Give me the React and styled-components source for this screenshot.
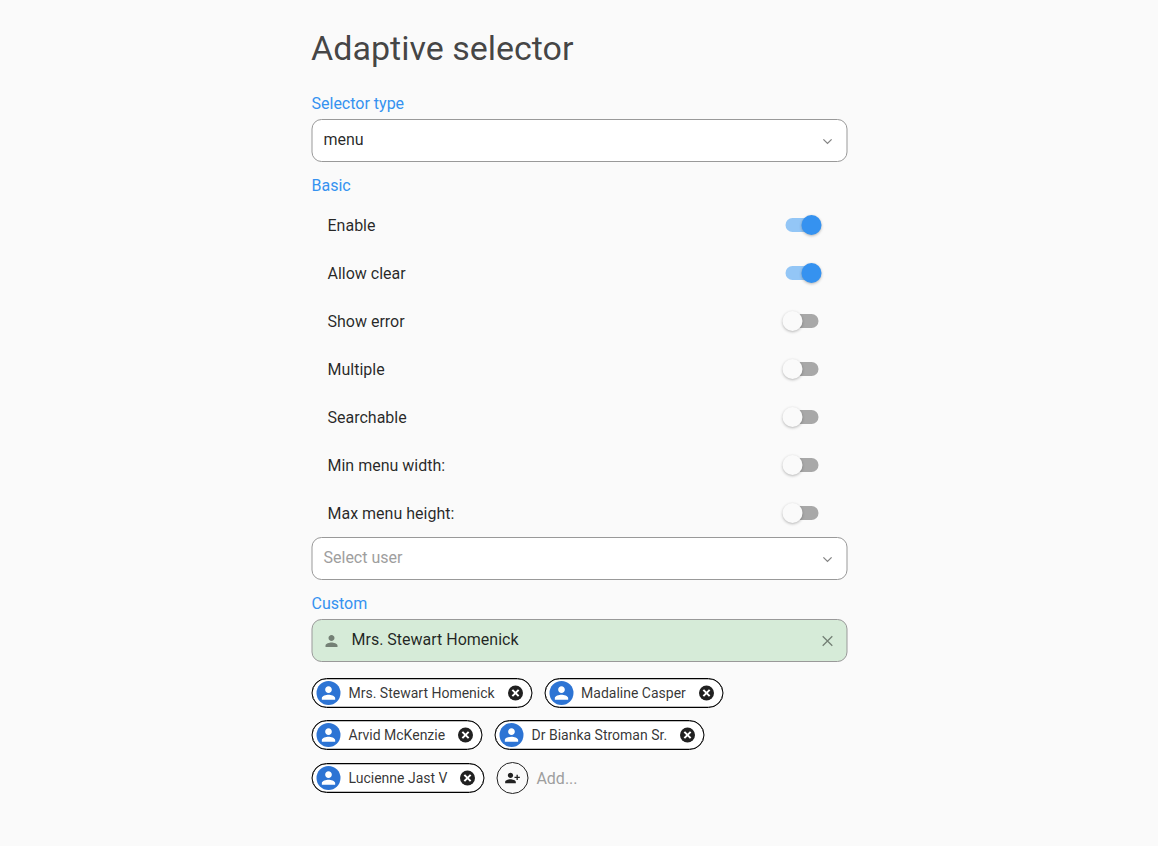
import React from "react";
import styled, { createGlobalStyle } from "styled-components";

const GlobalStyle = createGlobalStyle`
  * { box-sizing: border-box; }
  body {
    margin: 0;
    background: #fafafa;
    color: rgba(0, 0, 0, 0.85);
    font-family: Roboto, "Liberation Sans", sans-serif;
    font-size: 16px;
  }
`;

const Page = styled.main`
  width: 536px;
  margin: 0 auto;
  padding-top: 28px;
  transform: translateX(0.5px);
`;

const Title = styled.h1`
  margin: 0 0 0 -0.4px;
  font-size: 34px;
  font-weight: 400;
  line-height: 40px;
  color: rgba(0, 0, 0, 0.74);
`;

const SectionLabel = styled.h2`
  margin: ${(p) => p.$gap}px 0 6px;
  font-size: 16px;
  font-weight: 400;
  line-height: 19px;
  color: #3592f0;
`;

const Field = styled.div`
  display: flex;
  align-items: center;
  height: 43px;
  padding: 0 11px;
  border: 1px solid #999;
  border-radius: 10px;
  background: ${(p) => (p.$filled ? "#d6ebd8" : "#fff")};
`;

const FieldText = styled.span`
  flex: 1;
  line-height: 19px;
  padding-bottom: 2px;
  color: ${(p) => (p.$hint ? "#9e9e9e" : "rgba(0, 0, 0, 0.85)")};
`;

const Glyph = styled.svg`
  display: block;
  flex: none;
  width: ${(p) => p.$size}px;
  height: ${(p) => p.$size}px;
  fill: currentColor;
  color: ${(p) => p.$color || "inherit"};
  margin: ${(p) => p.$margin || 0};
`;

const SwitchList = styled.div`
  padding: 0 16px;
`;

const SwitchRow = styled.div`
  display: flex;
  align-items: center;
  justify-content: space-between;
  height: 48px;
`;

const Track = styled.button`
  display: flex;
  align-items: center;
  justify-content: ${(p) => (p.$on ? "flex-end" : "flex-start")};
  width: 33px;
  height: 14px;
  margin: 0 13px 0 0;
  padding: 0;
  border: 0;
  border-radius: 7px;
  background: ${(p) => (p.$on ? "#93c6f6" : "#a8a8a8")};
`;

const Thumb = styled.span`
  flex: none;
  width: 20px;
  height: 20px;
  margin: 0 -3px;
  border-radius: 50%;
  background: ${(p) => (p.$on ? "#3592f0" : "#fafafa")};
  box-shadow: 0 1px 3px rgba(0, 0, 0, 0.28);
`;

const ChipArea = styled.div`
  display: flex;
  flex-direction: column;
  padding-top: 16px;
`;

const ChipRow = styled.div`
  display: flex;
  align-items: center;
  gap: 12px;
  height: ${(p) => p.$height || 30}px;
  margin-bottom: ${(p) => p.$gap || 0}px;
`;

const ChipBox = styled.div`
  display: flex;
  align-items: center;
  height: 30px;
  padding: 0 7px 0 4px;
  border: 1px solid #000;
  border-radius: 15px;
  background: #fff;
  box-shadow: inset 0 0 0 0.3px #000;
`;

const Avatar = styled.span`
  display: grid;
  place-items: center;
  width: 24px;
  height: 24px;
  border-radius: 50%;
  background: #2d74d4;
  color: #fff;
`;

const ChipText = styled.span`
  margin: 0 11.4px 0 8px;
  font-size: 14px;
  line-height: 16px;
  color: rgba(0, 0, 0, 0.8);
  white-space: nowrap;
`;

const AddButton = styled.button`
  display: grid;
  place-items: center;
  width: 32px;
  height: 32px;
  margin-left: -0.5px;
  padding: 0;
  border: 1px solid #212121;
  border-radius: 50%;
  background: transparent;
  color: #212121;
`;

const AddHint = styled.span`
  margin-left: -4px;
  color: #9e9e9e;
`;

const PERSON =
  "M12 12c2.21 0 4-1.79 4-4s-1.79-4-4-4-4 1.79-4 4 1.79 4 4 4zm0 2c-2.67 0-8 1.34-8 4v2h16v-2c0-2.66-5.33-4-8-4z";
const PERSON_ADD =
  "M9 12c2.21 0 4-1.79 4-4s-1.79-4-4-4-4 1.79-4 4 1.79 4 4 4zm0 2c-2.67 0-8 1.34-8 4v2h16v-2c0-2.66-5.33-4-8-4zM20 10V7h-2v3h-3v2h3v3h2v-3h3v-2z";

const Chevron = () => (
  <Glyph $size={16} $color="#858585" viewBox="0 0 16 16">
    <path d="M3.9 6.4l4.1 4 4.1-4" fill="none" stroke="currentColor" strokeWidth="1.3" />
  </Glyph>
);

const Close = () => (
  <Glyph $size={16} $color="#748075" viewBox="0 0 16 16">
    <path d="M3.2 3.2l9.6 9.6M12.8 3.2l-9.6 9.6" fill="none" stroke="currentColor" strokeWidth="1.3" />
  </Glyph>
);

const Chip = ({ name }) => (
  <ChipBox>
    <Avatar>
      <Glyph $size={20} viewBox="0 0 24 24">
        <path d={PERSON} />
      </Glyph>
    </Avatar>
    <ChipText>{name}</ChipText>
    <Glyph $size={18} $color="#212121" viewBox="0 0 24 24">
      <circle cx="12" cy="12" r="10" />
      <path d="M7.8 7.8l8.4 8.4M16.2 7.8l-8.4 8.4" stroke="#fff" strokeWidth="2.7" />
    </Glyph>
  </ChipBox>
);

const options = [
  ["Enable", true],
  ["Allow clear", true],
  ["Show error", false],
  ["Multiple", false],
  ["Searchable", false],
  ["Min menu width:", false],
  ["Max menu height:", false],
];

export default function App() {
  return (
    <>
      <GlobalStyle />
      <Page>
        <Title>Adaptive selector</Title>
        <SectionLabel $gap={26}>Selector type</SectionLabel>
        <Field>
          <FieldText>menu</FieldText>
          <Chevron />
        </Field>
        <SectionLabel $gap={14}>Basic</SectionLabel>
        <SwitchList>
          {options.map(([label, on]) => (
            <SwitchRow key={label}>
              {label}
              <Track $on={on} role="switch" aria-checked={on} aria-label={label}>
                <Thumb $on={on} />
              </Track>
            </SwitchRow>
          ))}
        </SwitchList>
        <Field>
          <FieldText $hint>Select user</FieldText>
          <Chevron />
        </Field>
        <SectionLabel $gap={14}>Custom</SectionLabel>
        <Field $filled>
          <Glyph $size={18} $color="#748075" $margin="0 11px 0 -1px" viewBox="0 0 24 24">
            <path d={PERSON} />
          </Glyph>
          <FieldText>Mrs. Stewart Homenick</FieldText>
          <Close />
        </Field>
        <ChipArea>
          <ChipRow $gap={12}>
            <Chip name="Mrs. Stewart Homenick" />
            <Chip name="Madaline Casper" />
          </ChipRow>
          <ChipRow $gap={12}>
            <Chip name="Arvid McKenzie" />
            <Chip name="Dr Bianka Stroman Sr." />
          </ChipRow>
          <ChipRow $height={32}>
            <Chip name="Lucienne Jast V" />
            <AddButton aria-label="Add user">
              <Glyph $size={16} viewBox="0 0 24 24">
                <path d={PERSON_ADD} />
              </Glyph>
            </AddButton>
            <AddHint>Add...</AddHint>
          </ChipRow>
        </ChipArea>
      </Page>
    </>
  );
}
